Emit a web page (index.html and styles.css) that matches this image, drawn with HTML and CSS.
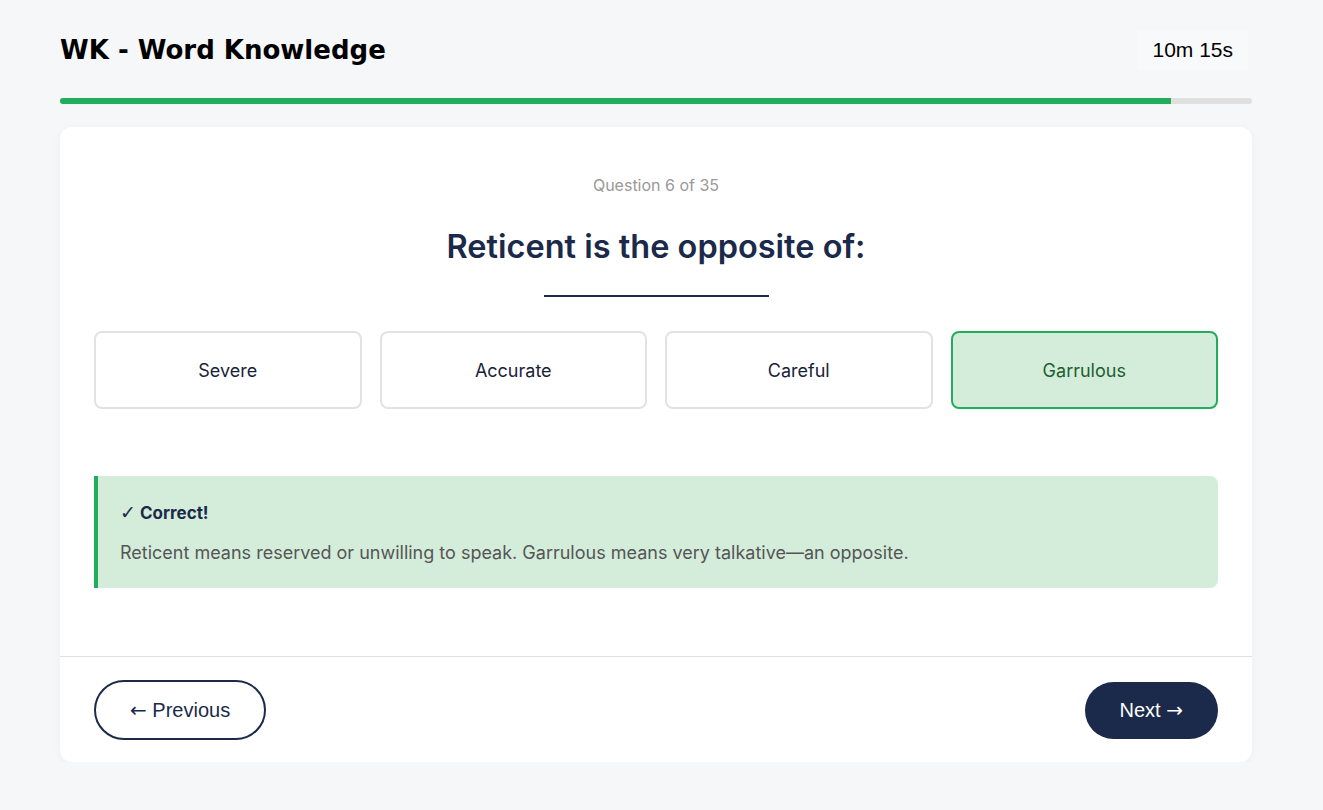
FILE: index.html
```html
<!DOCTYPE html>
<html>
    <head>
        <title>WK - Word Knowledge</title>
        <link rel="stylesheet" href="styles.css">
    </head>
    <body>
        <div class="quiz">
            <div class="quiz-header">
                <h1 class="quiz-title">WK - Word Knowledge</h1>
                <div class="timer">10m 15s</div>
            </div>
            <div class="progress">
                <div class="progress-fill" style="width: 93.2%"></div>
            </div>
            <div class="card">
                <div class="card-body">
                    <div class="question-count">Question 6 of 35</div>
                    <h2 class="question">Reticent is the opposite of:</h2>
                    <div class="question-rule"></div>
                    <div class="options">
                        <button class="option">Severe</button>
                        <button class="option">Accurate</button>
                        <button class="option">Careful</button>
                        <button class="option selected">Garrulous</button>
                    </div>
                    <div class="feedback">
                        <div class="feedback-title"><span class="check">&#10003;</span> Correct!</div>
                        <p class="feedback-text">Reticent means reserved or unwilling to speak. Garrulous means very talkative—an opposite.</p>
                    </div>
                </div>
                <div class="card-footer">
                    <button class="nav-button prev"><span class="arrow">&larr;</span> Previous</button>
                    <button class="nav-button next">Next <span class="arrow">&rarr;</span></button>
                </div>
            </div>
        </div>
    </body>
</html>
```

FILE: styles.css
```css
/* Page */
body {
    margin: 0;
    background-color: #f5f7f9;
    font-family: 'Inter', 'Noto Sans', sans-serif;
    color: #1b2a4a;
}

.quiz {
    width: 1192px;
    padding: 30px 0 0 60px;
}

/* Header with title and timer */
.quiz-header {
    display: flex;
    justify-content: space-between;
    align-items: center;
    height: 40px;
}

.quiz-title {
    margin: 0;
    font-family: 'DejaVu Sans', sans-serif;
    font-size: 26px;
    font-weight: 700;
    color: #000;
}

.timer {
    margin-right: 4px;
    padding: 8px 15px;
    background-color: #f8f9fb;
    font-family: 'Liberation Sans', Arial, sans-serif;
    font-size: 21px;
    color: #000;
}

.progress {
    margin-top: 28px;
    height: 6px;
    background-color: #e0e0e0;
    border-radius: 3px;
    overflow: hidden;
}

.progress-fill {
    height: 100%;
    background-color: #22ad5c;
}

/* Question card */
.card {
    margin-top: 23px;
    background-color: #fff;
    border-radius: 12px;
    box-shadow: 0 2px 10px rgba(0, 0, 0, 0.04);
}

.card-body {
    padding: 48px 34px 68px;
    text-align: center;
}

.question-count {
    font-size: 16px;
    color: #999;
    line-height: 20px;
}

.question {
    margin: 32px 0 0;
    font-size: 32.5px;
    font-weight: 600;
    line-height: 40px;
    color: #1b2a4a;
}

.question-rule {
    width: 225px;
    height: 2px;
    margin: 28px auto 34px;
    background-color: #1b2a4a;
}

.options {
    display: grid;
    grid-template-columns: repeat(4, 1fr);
    gap: 18px;
}

.option {
    height: 78px;
    background-color: #fff;
    border: 2px solid #e2e2e2;
    border-radius: 8px;
    font-family: 'Inter', sans-serif;
    font-size: 18px;
    color: #1a2238;
}

.option.selected {
    background-color: #d4eddb;
    border-color: #22ad5c;
    color: #1d5e2f;
}

/* Answer feedback */
.feedback {
    margin-top: 67px;
    padding: 24px 22px 23px;
    background-color: #d4eddb;
    border-left: 4px solid #22ad5c;
    border-radius: 0 8px 8px 0;
    text-align: left;
}

.feedback-title {
    font-size: 17px;
    font-weight: 700;
    line-height: 24px;
    color: #1b2a4a;
}

.check {
    font-family: 'DejaVu Sans', sans-serif;
    font-size: 19px;
    font-weight: 700;
}

.feedback-text {
    margin: 15px 0 0;
    font-size: 18px;
    line-height: 25px;
    color: #555;
}

/* Footer navigation */
.card-footer {
    display: flex;
    justify-content: space-between;
    align-items: center;
    padding: 23px 34px 22px;
    border-top: 1px solid #e0e0e0;
}

.nav-button {
    font-family: 'Liberation Sans', Arial, sans-serif;
    font-size: 20px;
    border-radius: 30px;
    cursor: pointer;
}

.arrow {
    font-family: 'DejaVu Sans', sans-serif;
}

.prev {
    height: 60px;
    padding: 0 34px;
    background-color: #fff;
    border: 2px solid #1b2a4a;
    color: #1b2a4a;
}

.next {
    height: 57px;
    padding: 0 35px;
    background-color: #1b2a4a;
    border: none;
    color: #fff;
}
```
